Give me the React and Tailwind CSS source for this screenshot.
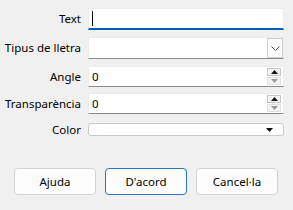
import React from 'react';

const font = { fontFamily: '"Segoe UI", "Noto Sans", "Open Sans", sans-serif' };

const Label = ({ children }) => (
  <div className="w-[81px] shrink-0 text-right text-[11.5px] leading-none text-black">{children}</div>
);

const Spin = () => (
  <div className="flex flex-col gap-px mr-[2px]">
    <div className="w-[14px] h-[8px] border border-[#c6c6c6] bg-[#f3f3f3] flex items-center justify-center">
      <svg width="7" height="4" viewBox="0 0 7 4"><path d="M0 4 L3.5 0 L7 4 Z" fill="#111" /></svg>
    </div>
    <div className="w-[14px] h-[8px] border border-[#e0e0e0] bg-[#f3f3f3] flex items-center justify-center">
      <svg width="7" height="4" viewBox="0 0 7 4"><path d="M0 0 L3.5 4 L7 0 Z" fill="#9a9a9a" /></svg>
    </div>
  </div>
);

const NumberField = ({ label, value }) => (
  <div className="flex items-center gap-[7px]">
    <Label>{label}</Label>
    <div className="w-[196px] h-[21px] bg-white border border-[#ececec] border-b-[#8a8a8a] flex items-center justify-between">
      <span className="pl-[3px] text-[11.5px] leading-none text-black">{value}</span>
      <Spin />
    </div>
  </div>
);

const Button = ({ children, primary }) => (
  <button
    className={`w-[82px] h-[27px] rounded-[4px] bg-[#fdfdfd] text-[11.5px] text-black flex items-center justify-center border ${
      primary ? 'border-[#2b74c5]' : 'border-[#d3d3d3]'
    }`}
  >
    {children}
  </button>
);

export default function App() {
  return (
    <div className="w-[293px] h-[210px] bg-[#f0f0f0] overflow-hidden" style={font}>
      <div className="flex flex-col pt-[8px]">
        {/* Text */}
        <div className="flex items-center gap-[7px]">
          <Label>Text</Label>
          <div className="w-[196px] h-[22px] bg-white border border-[#ececec] border-b-2 border-b-[#005fb8] flex items-center">
            <div className="ml-[3px] w-px h-[15px] bg-black" />
          </div>
        </div>

        {/* Tipus de lletra */}
        <div className="flex items-center gap-[7px] mt-[7px]">
          <Label>Tipus de lletra</Label>
          <div className="w-[196px] h-[22px] bg-white border border-[#ececec] border-b-[#8a8a8a] flex items-center justify-end">
            <div className="w-[16px] h-[20px] border border-[#cfcfcf] bg-[#fbfbfb] flex items-center justify-center">
              <svg width="9" height="5" viewBox="0 0 9 5">
                <path d="M0.5 0.5 L4.5 4.5 L8.5 0.5" fill="none" stroke="#555" strokeWidth="1" />
              </svg>
            </div>
          </div>
        </div>

        <div className="mt-[7px]">
          <NumberField label="Angle" value="0" />
        </div>
        <div className="mt-[6px]">
          <NumberField label="Transparència" value="0" />
        </div>

        {/* Color */}
        <div className="flex items-center gap-[7px] mt-[9px]">
          <Label>Color</Label>
          <div className="w-[196px] h-[13px] bg-white border border-[#c9c9c9] rounded-[3px] flex items-center justify-end pr-[10px]">
            <svg width="7" height="4" viewBox="0 0 7 4"><path d="M0 0 L3.5 4 L7 0 Z" fill="#111" /></svg>
          </div>
        </div>

        {/* Buttons */}
        <div className="flex gap-[9px] pl-[14px] mt-[32px]">
          <Button>Ajuda</Button>
          <Button primary>D'acord</Button>
          <Button>Cancel·la</Button>
        </div>
      </div>
    </div>
  );
}
